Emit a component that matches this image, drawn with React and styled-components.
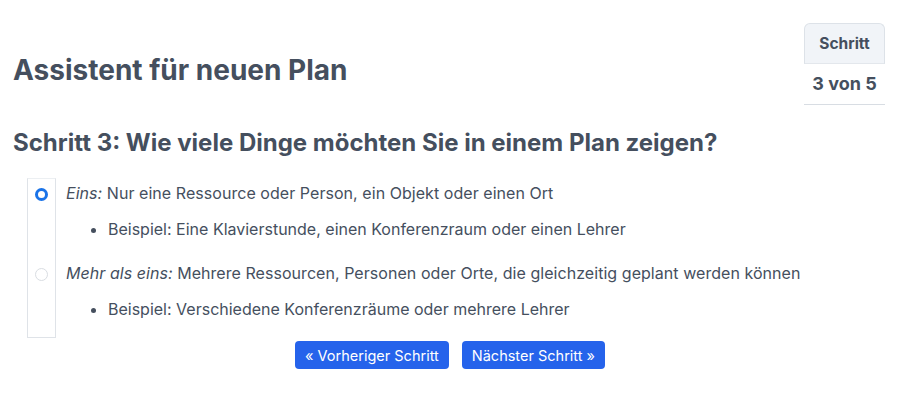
import React from "react";
import styled, { createGlobalStyle } from "styled-components";

const Global = createGlobalStyle`
  html, body { margin: 0; padding: 0; background: #fff; }
  body { font-family: Inter, "Liberation Sans", Arial, sans-serif; color: #454f5e; }
  * { box-sizing: border-box; }
`;

const Page = styled.div`
  width: 900px;
  height: 397px;
  padding: 23px 15px 0 13px;
`;

const Header = styled.div`
  display: flex;
  justify-content: space-between;
  align-items: flex-start;
`;

const Title = styled.h1`
  margin: 31px 0 0;
  font-size: 28px;
  font-weight: 700;
  line-height: 32px;
  color: #454f5e;
`;

const StepTable = styled.div`
  width: 81px;
  display: flex;
  flex-direction: column;
  text-align: center;
`;

const StepHead = styled.div`
  height: 41px;
  line-height: 40px;
  background: #f1f4f8;
  border: 1px solid #dde2e8;
  border-bottom: 1px solid #e3e7ec;
  border-radius: 6px 6px 0 0;
  font-size: 15.5px;
  font-weight: 700;
  color: #454f5e;
`;

const StepCell = styled.div`
  height: 41px;
  line-height: 40px;
  border-bottom: 1px solid #d8dde3;
  font-size: 18px;
  font-weight: 700;
  color: #454f5e;
`;

const Question = styled.h2`
  margin: 22px 0 0;
  font-size: 24px;
  font-weight: 700;
  line-height: 32px;
  color: #454f5e;
`;

const Options = styled.div`
  margin: 19px 0 0 14px;
  display: grid;
  grid-template-columns: 29px 1fr;
`;

const RadioCol = styled.div`
  grid-row: 1 / span 2;
  border: 1px solid #dfe3e8;
  border-top-color: #eceff2;
  height: 160px;
`;

const RadioRow = styled.div`
  height: ${p => p.$h}px;
  display: flex;
  justify-content: center;
  padding-top: 8.5px;
`;

const Radio = styled.span`
  width: 13px;
  height: 13px;
  border-radius: 50%;
  ${p => p.$checked
    ? "border: 3.8px solid #1a73e8; background: #fff;"
    : "border: 1px solid #d9dde2; background: #fff;"}
`;

const OptionList = styled.div`
  grid-column: 2;
  grid-row: 1 / span 2;
  display: flex;
  flex-direction: column;
`;

const Option = styled.div`
  padding: 4px 0 0 10px;
  height: ${p => p.$h}px;
`;

const OptionText = styled.div`
  font-size: 16px;
  line-height: 22px;
  letter-spacing: 0.05px;
  color: #454f5e;
  em { font-style: italic; }
`;

const Bullets = styled.ul`
  margin: 14px 0 0;
  padding-left: 42px;
  font-size: 16px;
  line-height: 22px;
  li::marker { color: #454f5e; }
`;

const Button = styled.button`
  height: 28px;
  padding: 0 10px;
  border: none;
  border-radius: 4px;
  background: #2563eb;
  color: #fff;
  font-family: Inter, "Liberation Sans", Arial, sans-serif;
  font-size: 14.5px;
  cursor: pointer;
`;

const ButtonRow = styled.div`
  width: 872px;
  display: flex;
  justify-content: center;
  gap: 13px;
  padding-left: 2px;
  margin-top: 3px;
`;

export default function App() {
  return (
    <>
      <Global />
      <Page>
        <Header>
          <Title>Assistent für neuen Plan</Title>
          <StepTable>
            <StepHead>Schritt</StepHead>
            <StepCell>3 von 5</StepCell>
          </StepTable>
        </Header>
        <Question>Schritt 3: Wie viele Dinge möchten Sie in einem Plan zeigen?</Question>
        <Options>
          <RadioCol>
            <RadioRow $h={80}><Radio $checked /></RadioRow>
            <RadioRow $h={78}><Radio /></RadioRow>
          </RadioCol>
          <OptionList>
            <Option $h={80}>
              <OptionText><em>Eins:</em> Nur eine Ressource oder Person, ein Objekt oder einen Ort</OptionText>
              <Bullets><li>Beispiel: Eine Klavierstunde, einen Konferenzraum oder einen Lehrer</li></Bullets>
            </Option>
            <Option $h={80}>
              <OptionText><em>Mehr als eins:</em> Mehrere Ressourcen, Personen oder Orte, die gleichzeitig geplant werden können</OptionText>
              <Bullets><li>Beispiel: Verschiedene Konferenzräume oder mehrere Lehrer</li></Bullets>
            </Option>
          </OptionList>
        </Options>
        <ButtonRow>
          <Button>« Vorheriger Schritt</Button>
          <Button>Nächster Schritt »</Button>
        </ButtonRow>
      </Page>
    </>
  );
}
